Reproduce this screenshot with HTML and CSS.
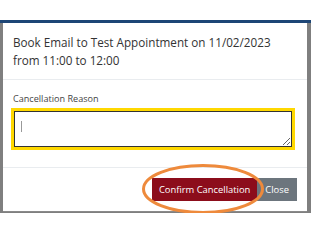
FILE: index.html
```
<!DOCTYPE html>
<html>
<head>
<meta charset="UTF-8">
<title>Cancel Appointment</title>
<link rel="stylesheet" href="styles.css">
</head>
<body>
<div class="backdrop">
  <div class="modal">
    <div class="modal-header">Book Email to Test Appointment on 11/02/2023 from 11:00 to 12:00</div>
    <div class="modal-body">
      <label class="label" for="reason">Cancellation Reason</label>
      <div class="field">
        <textarea id="reason" class="reason" autofocus></textarea>
        <span class="caret"></span>
      </div>
    </div>
    <div class="modal-footer">
      <button class="btn btn-confirm">Confirm Cancellation</button><button class="btn btn-close">Close</button>
      <svg class="ring" width="124" height="52" viewBox="0 0 124 52">
        <ellipse cx="62" cy="26" rx="59.5" ry="23.5" fill="none" stroke="#ee8a3c" stroke-width="3"/>
      </svg>
    </div>
  </div>
</div>
</body>
</html>
```
FILE: styles.css
```
body {
    margin: 0;
    background: #fff;
    font-family: "Open Sans", sans-serif;
    color: #333;
}
.backdrop {
    margin-top: 20px;
    border-top: 3px solid #1d4676;
    background: #7f7f7f;
    padding: 0 4px 1px 3px;
}
.modal {
    background: #fff;
    border-bottom: 1px solid #8a8a8a;
}
.modal-header {
    padding: 10px 30px 10px 10px;
    font-size: 11.7px;
    line-height: 18px;
    border-bottom: 1px solid #e9ecef;
}
.modal-body {
    padding: 12px 10px 17px 10px;
}
.label {
    display: block;
    font-size: 9.1px;
    line-height: 14px;
    color: #444;
}
.field {
    position: relative;
}
.reason {
    display: block;
    box-sizing: border-box;
    width: calc(100% - 6px);
    height: 36px;
    margin: 5px 3px 3px 1px;
    border: 1px solid #333;
    box-shadow: 0 0 0 3px #ffd800;
    outline: none;
    resize: vertical;
    caret-color: transparent;
}
.caret {
    position: absolute;
    left: 8px;
    top: 10px;
    width: 1px;
    height: 11px;
    background: #999;
}
.modal-footer {
    position: relative;
    display: flex;
    justify-content: flex-end;
    padding: 10px 10px 10px 10px;
    border-top: 1px solid #e9ecef;
}
.btn {
    height: 23px;
    border: 0;
    border-radius: 0;
    color: #fff;
    font-family: "Open Sans", sans-serif;
    font-size: 9.4px;
    padding: 0 7px;
}
.btn-confirm {
    background: #8c0d1b;
}
.btn-close {
    background: #6c757d;
    padding: 0 8px;
}
.ring {
    position: absolute;
    left: 138px;
    top: -5px;
}
```
